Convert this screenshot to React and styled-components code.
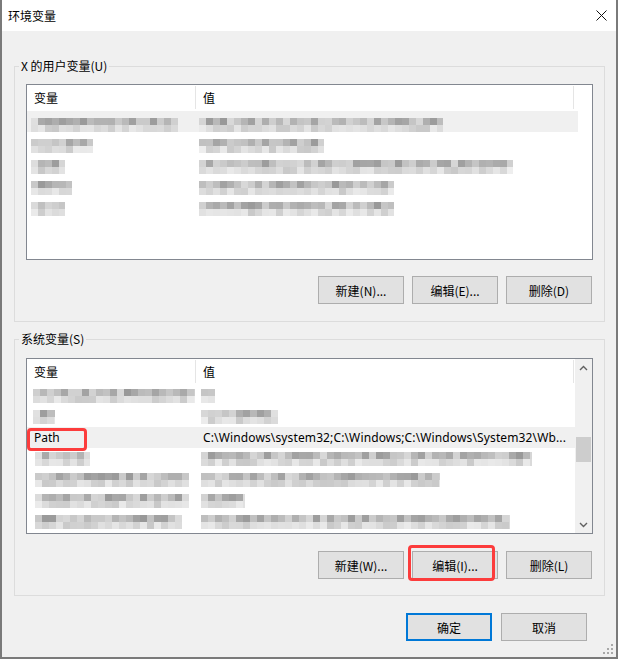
import React from 'react';
import styled, { createGlobalStyle } from 'styled-components';

const FONT = `"Noto Sans CJK SC", "Noto Sans", sans-serif`;
const LATIN = `"Noto Sans", "Noto Sans CJK SC", sans-serif`;

const GlobalStyle = createGlobalStyle`
  html, body { margin: 0; padding: 0; }
  body { background: #f0f0f0; font-family: ${FONT}; font-size: 12px; color: #000; }
  *, *::before, *::after { box-sizing: border-box; }
`;

const Window = styled.div`
  position: relative;
  width: 618px;
  height: 659px;
  display: flex;
  flex-direction: column;
  background: #f0f0f0;
  border: 2px solid #7a7a7a;
  border-top: none;
`;

const TitleBar = styled.div`
  height: 31px;
  flex: none;
  background: #fff;
  display: flex;
  align-items: center;
  justify-content: space-between;
  padding: 0 9px 0 6px;
  font-size: 12px;
`;

const Body = styled.div`
  flex: 1;
  display: flex;
  flex-direction: column;
  padding: 27px 11px 0 12px;
`;

const Group = styled.fieldset`
  margin: ${p => p.$mt || 0}px 0 0 0;
  padding: 0;
  border: 1px solid #dcdcdc;
  min-width: 0;
`;

const Legend = styled.legend`
  margin-left: 4px;
  padding: 0 2px;
  line-height: 16px;
  font-size: 12px;
`;

const GroupInner = styled.div`
  padding: ${p => p.$pt}px 11px ${p => p.$pb}px 11px;
  display: flex;
  flex-direction: column;
`;

const List = styled.div`
  height: 176px;
  border: 1px solid #828790;
  background: #fff;
  display: flex;
  overflow: hidden;
`;

const ListContent = styled.div`
  flex: 1;
  display: flex;
  flex-direction: column;
  min-width: 0;
`;

const Header = styled.div`
  display: flex;
  height: 26px;
  flex: none;
`;

const HeaderCell = styled.div`
  width: ${p => p.$w}px;
  flex: none;
  padding-left: 7px;
  border-right: 1px solid #e5e5e5;
  margin: 1px 0 2px;
  line-height: 23px;
`;

const Row = styled.div`
  display: flex;
  height: 21px;
  flex: none;
  align-items: ${p => p.$align || 'center'};
  margin-right: ${p => p.$mr || 0}px;
  background: ${p => (p.$sel ? '#f0f0f0' : 'transparent')};
`;

const Cell = styled.div`
  position: relative;
  width: ${p => (p.$w ? `${p.$w}px` : 'auto')};
  flex: ${p => (p.$w ? 'none' : '1')};
  min-width: 0;
  display: flex;
  align-items: inherit;
  height: 100%;
  white-space: nowrap;
`;

const CellText = styled.span`
  padding-left: 7px;
  font-family: ${LATIN};
  font-size: 12px;
  line-height: 21px;
  letter-spacing: ${p => p.$ls || 0}px;
`;

const Mosaic = styled.span`
  display: block;
  flex: none;
  width: ${p => p.$w}px;
  height: 14px;
  margin-left: ${p => p.$x}px;
  background: ${p => p.$bg};
  filter: blur(0.3px);
`;

const Annot = styled.span`
  position: absolute;
  left: 0;
  top: 1px;
  bottom: -3px;
  width: 60px;
  border: 3px solid #fc3c3c;
  border-radius: 4px;
  pointer-events: none;
`;

const ScrollBar = styled.div`
  width: 17px;
  flex: none;
  background: #f0f0f0;
  display: flex;
  flex-direction: column;
`;

const ArrowBox = styled.div`
  height: 17px;
  flex: none;
  display: flex;
  align-items: center;
  justify-content: center;
`;

const Track = styled.div`
  flex: 1;
  padding-top: 61px;
  display: flex;
  flex-direction: column;
  align-items: center;
`;

const Thumb = styled.div`
  width: 15px;
  height: 25px;
  background: #cdcdcd;
`;

const ButtonRow = styled.div`
  display: flex;
  justify-content: flex-end;
  gap: 8px;
  padding-right: 1px;
  margin-top: ${p => p.$mt}px;
`;

const Button = styled.button`
  width: 86px;
  height: 28px;
  padding: 0;
  margin: 0;
  background: #e1e1e1;
  border: ${p => (p.$primary ? '2px solid #0078d7' : '1px solid #adadad')};
  font-family: ${FONT};
  font-size: 12px;
  color: #000;
  position: relative;
  ${p =>
    p.$marked &&
    `&::after {
      content: '';
      position: absolute;
      top: -7px;
      left: -5px;
      right: 2px;
      bottom: -3px;
      border: 3px solid #fc3c3c;
      border-radius: 4px;
    }`}
`;

const Footer = styled.div`
  display: flex;
  justify-content: flex-end;
  gap: 9px;
  margin-top: 17px;
  padding-right: 18px;
`;

const Grip = styled.svg`
  position: absolute;
  right: 2px;
  bottom: 2px;
`;

function mosaicBg(seed, w) {
  let s = seed * 7919 + 13;
  const rnd = () => {
    s = (s * 9301 + 49297) % 233280;
    return s / 233280;
  };
  const n = Math.ceil(w / 7);
  const top = [];
  const bot = [];
  for (let i = 0; i < n; i++) {
    const a = i * 7;
    const b = Math.min(w, (i + 1) * 7);
    const edge = i === 0 || i === n - 1;
    let t = Math.round(0x98 + rnd() * 0x40);
    let bb = Math.round(0xc8 + rnd() * 0x22);
    if (edge) {
      t = Math.round(t + (0xf0 - t) * 0.4);
      bb = Math.round(bb + (0xf4 - bb) * 0.35);
    }
    top.push(`rgb(${t},${t},${t}) ${a}px ${b}px`);
    bot.push(`rgb(${bb},${bb},${bb}) ${a}px ${b}px`);
  }
  return `linear-gradient(90deg, ${top.join(',')}) left top / 100% 7px no-repeat, linear-gradient(90deg, ${bot.join(',')}) left bottom / 100% 7px no-repeat`;
}

const userRows = [
  { v: [31, 178], val: [199, 443], sel: true },
  { v: [31, 93], val: [199, 324] },
  { v: [31, 65], val: [199, 513] },
  { v: [31, 72], val: [199, 394] },
  { v: [31, 65], val: [199, 394] },
];

const sysRows = [
  { v: [33, 195], val: [201, 215] },
  { v: [33, 55], val: [201, 278] },
  { path: true },
  { v: [35, 90], val: [201, 532] },
  { v: [35, 189], val: [201, 440] },
  { v: [35, 189], val: [201, 245] },
  { v: [35, 182], val: [201, 510] },
];

const COL1 = 169;
const LIST_LEFT = 27;
const COL2_LEFT = 196;

function BlurRow({ r, i, align, mr, seedBase }) {
  return (
    <Row $align={align} $sel={r.sel} $mr={mr}>
      <Cell $w={COL1}>
        <Mosaic $x={r.v[0] - LIST_LEFT} $w={r.v[1] - r.v[0]} $bg={mosaicBg(seedBase + i * 2, r.v[1] - r.v[0])} />
      </Cell>
      <Cell>
        <Mosaic $x={r.val[0] - COL2_LEFT} $w={r.val[1] - r.val[0]} $bg={mosaicBg(seedBase + i * 2 + 1, r.val[1] - r.val[0])} />
      </Cell>
    </Row>
  );
}

function ListHeader() {
  return (
    <Header>
      <HeaderCell $w={COL1}>变量</HeaderCell>
      <HeaderCell $w={378}>值</HeaderCell>
    </Header>
  );
}

const Chevron = ({ up }) => (
  <svg width="9" height="6" viewBox="0 0 9 6">
    <path
      d={up ? 'M1 5 L4.5 1.5 L8 5' : 'M1 1 L4.5 4.5 L8 1'}
      fill="none"
      stroke="#606060"
      strokeWidth="1.4"
    />
  </svg>
);

export default function App() {
  return (
    <>
      <GlobalStyle />
      <Window>
        <TitleBar>
          <span>环境变量</span>
          <svg width="11" height="11" viewBox="0 0 11 11">
            <path d="M0.5 0.5 L10.5 10.5 M10.5 0.5 L0.5 10.5" stroke="#111" strokeWidth="1" />
          </svg>
        </TitleBar>
        <Body>
          <Group>
            <Legend>X 的用户变量(U)</Legend>
            <GroupInner $pt={10} $pb={17}>
              <List>
                <ListContent>
                  <ListHeader />
                  {userRows.map((r, i) => (
                    <BlurRow key={i} r={r} i={i} align="flex-end" mr={14} seedBase={3} />
                  ))}
                </ListContent>
              </List>
              <ButtonRow $mt={16}>
                <Button>新建(N)...</Button>
                <Button>编辑(E)...</Button>
                <Button>删除(D)</Button>
              </ButtonRow>
            </GroupInner>
          </Group>
          <Group $mt={9}>
            <Legend>系统变量(S)</Legend>
            <GroupInner $pt={11} $pb={16}>
              <List>
                <ListContent>
                  <ListHeader />
                  {sysRows.map((r, i) =>
                    r.path ? (
                      <Row key={i} $sel>
                        <Cell $w={COL1}>
                          <CellText>Path</CellText>
                          <Annot />
                        </Cell>
                        <Cell>
                          <CellText $ls={0.13}>C:\Windows\system32;C:\Windows;C:\Windows\System32\Wb...</CellText>
                        </Cell>
                      </Row>
                    ) : (
                      <BlurRow key={i} r={r} i={i} seedBase={31} />
                    )
                  )}
                </ListContent>
                <ScrollBar>
                  <ArrowBox>
                    <Chevron up />
                  </ArrowBox>
                  <Track>
                    <Thumb />
                  </Track>
                  <ArrowBox>
                    <Chevron />
                  </ArrowBox>
                </ScrollBar>
              </List>
              <ButtonRow $mt={17}>
                <Button>新建(W)...</Button>
                <Button $marked>编辑(I)...</Button>
                <Button>删除(L)</Button>
              </ButtonRow>
            </GroupInner>
          </Group>
          <Footer>
            <Button $primary>确定</Button>
            <Button>取消</Button>
          </Footer>
        </Body>
        <Grip width="12" height="12" viewBox="0 0 12 12">
          {[
            [9, 1], [9, 5], [5, 5], [9, 9], [5, 9], [1, 9],
          ].map(([x, y], k) => (
            <rect key={k} x={x} y={y} width="2" height="2" fill="#a8a8a8" />
          ))}
        </Grip>
      </Window>
    </>
  );
}
